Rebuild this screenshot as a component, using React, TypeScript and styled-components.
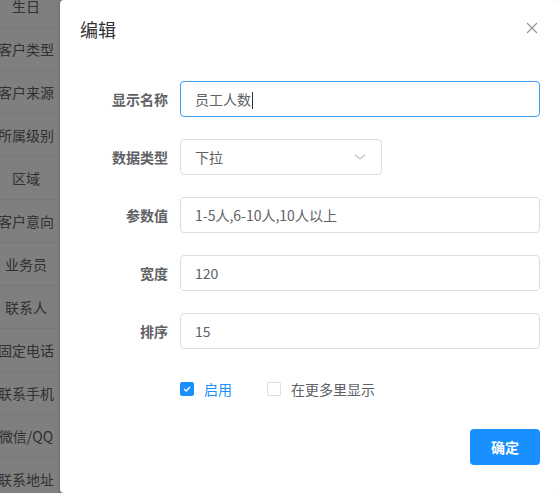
import React from "react";
import styled, { createGlobalStyle } from "styled-components";

const Global = createGlobalStyle`
  html, body { margin: 0; padding: 0; background: #fff; overflow: hidden; }
  body { font-family: "Noto Sans CJK SC", "Noto Sans", sans-serif; font-size: 14px; }
  * { box-sizing: border-box; }
`;

const Page = styled.div`
  position: relative;
  width: 558px;
  height: 493px;
  overflow: hidden;
`;

const Table = styled.div`
  display: flex;
  flex-direction: column;
  width: 60px;
  margin-top: -15px;
  background: #fff;
`;

const Cell = styled.div`
  height: 43px;
  width: 60px;
  flex: none;
  padding-right: 8px;
  display: flex;
  align-items: center;
  justify-content: center;
  white-space: nowrap;
  color: #606266;
  font-size: 14px;
  border-bottom: 1px solid #ebeef5;
`;

const Overlay = styled.div`
  position: absolute;
  inset: 0;
  background: rgba(0, 0, 0, 0.5);
  display: flex;
  padding-left: 60px;
`;

const Dialog = styled.div`
  width: 500px;
  flex: none;
  height: 493px;
  background: #fff;
  border-radius: 4px;
  box-shadow: 0 1px 3px rgba(0, 0, 0, 0.3);
  display: flex;
  flex-direction: column;
`;

const Header = styled.div`
  display: flex;
  justify-content: space-between;
  align-items: flex-start;
  padding: 17px 20px 10px;
`;

const Title = styled.span`
  font-size: 18px;
  line-height: 24px;
  color: #303133;
`;

const Close = styled.button`
  border: none;
  background: none;
  padding: 0;
  margin-top: 3px;
  width: 16px;
  height: 16px;
  display: flex;
  align-items: center;
  justify-content: center;
  color: #909399;
  cursor: pointer;
`;

const Body = styled.div`
  padding: 30px 20px 0;
  display: flex;
  flex-direction: column;
`;

const Item = styled.div`
  display: flex;
  align-items: center;
  margin-bottom: 22px;
`;

const Label = styled.label`
  width: 100px;
  flex: none;
  padding-right: 12px;
  text-align: right;
  font-weight: 700;
  color: #606266;
  font-size: 14px;
`;

const Field = styled.div<{ $focus?: boolean; $w?: number }>`
  height: 36px;
  width: ${(p) => (p.$w ? `${p.$w}px` : "360px")};
  border: 1px solid ${(p) => (p.$focus ? "#409eff" : "#dcdfe6")};
  border-radius: 4px;
  padding: 0 15px 0 14px;
  display: flex;
  align-items: center;
  justify-content: space-between;
  color: #606266;
  font-size: 14px;
  background: #fff;
`;

const Caret = styled.span`
  display: inline-block;
  width: 1px;
  height: 17px;
  background: #303133;
  margin-left: 1px;
  vertical-align: middle;
`;

const Checks = styled.div`
  display: flex;
  align-items: center;
  height: 36px;
  margin-left: 100px;
  margin-bottom: 22px;
`;

const CheckItem = styled.label<{ $on?: boolean }>`
  display: flex;
  align-items: center;
  margin-right: 35px;
  color: ${(p) => (p.$on ? "#1890ff" : "#606266")};
  font-size: 14px;
`;

const Box = styled.span<{ $on?: boolean }>`
  width: 14px;
  height: 14px;
  border-radius: 2px;
  border: 1px solid ${(p) => (p.$on ? "#1890ff" : "#dcdfe6")};
  background: ${(p) => (p.$on ? "#1890ff" : "#fff")};
  display: flex;
  align-items: center;
  justify-content: center;
  margin-right: 10px;
`;

const Footer = styled.div`
  display: flex;
  justify-content: flex-end;
  padding: 0 20px;
`;

const Button = styled.button`
  width: 70px;
  height: 36px;
  border: none;
  border-radius: 4px;
  background: #1890ff;
  color: #fff;
  font-weight: 700;
  font-size: 14px;
  font-family: "Noto Sans CJK SC", sans-serif;
`;

const rows = ["生日", "客户类型", "客户来源", "所属级别", "区域", "客户意向", "业务员", "联系人", "固定电话", "联系手机", "微信/QQ", "联系地址"];

export default function App() {
  return (
    <Page>
      <Global />
      <Table>
        {rows.map((r) => (
          <Cell key={r}>{r}</Cell>
        ))}
      </Table>
      <Overlay>
        <Dialog>
          <Header>
            <Title>编辑</Title>
            <Close aria-label="close">
              <svg width="12" height="12" viewBox="0 0 12 12">
                <path d="M1 1 L11 11 M11 1 L1 11" stroke="currentColor" strokeWidth="1.2" />
              </svg>
            </Close>
          </Header>
          <Body>
            <Item>
              <Label>显示名称</Label>
              <Field $focus>
                <span>
                  员工人数
                  <Caret />
                </span>
              </Field>
            </Item>
            <Item>
              <Label>数据类型</Label>
              <Field $w={202}>
                <span>下拉</span>
                <svg width="12" height="8" viewBox="0 0 12 8">
                  <path d="M1 1.5 L6 6 L11 1.5" fill="none" stroke="#c0c4cc" strokeWidth="1.1" />
                </svg>
              </Field>
            </Item>
            <Item>
              <Label>参数值</Label>
              <Field>1-5人,6-10人,10人以上</Field>
            </Item>
            <Item>
              <Label>宽度</Label>
              <Field>120</Field>
            </Item>
            <Item>
              <Label>排序</Label>
              <Field>15</Field>
            </Item>
            <Checks>
              <CheckItem $on>
                <Box $on>
                  <svg width="10" height="8" viewBox="0 0 10 8">
                    <path d="M2 4 L4.2 6 L8 2" fill="none" stroke="#fff" strokeWidth="1.3" />
                  </svg>
                </Box>
                启用
              </CheckItem>
              <CheckItem>
                <Box />
                在更多里显示
              </CheckItem>
            </Checks>
          </Body>
          <Footer>
            <Button>确定</Button>
          </Footer>
        </Dialog>
      </Overlay>
    </Page>
  );
}
